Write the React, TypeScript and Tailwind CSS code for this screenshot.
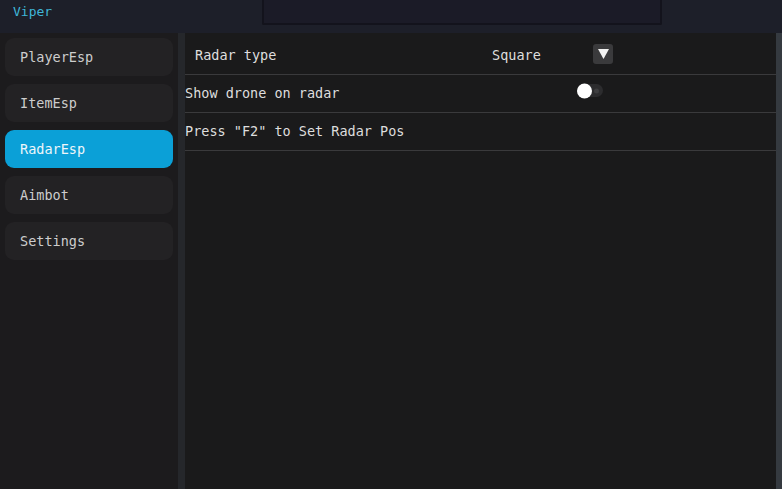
import { useState } from "react";

const tabs = ["PlayerEsp", "ItemEsp", "RadarEsp", "Aimbot", "Settings"];

export default function App() {
  const [active, setActive] = useState("RadarEsp");
  const [drone, setDrone] = useState(false);

  return (
    <div
      className="flex h-[489px] w-[782px] flex-col overflow-hidden bg-[#1d1f29] text-[13.5px] text-[#dedede]"
      style={{ fontFamily: '"DejaVu Sans Mono", "Liberation Mono", monospace' }}
    >
      {/* header */}
      <div className="flex h-[33px] shrink-0 items-start">
        <div className="w-[262px] pl-[13px] pt-[3px] text-[13px] leading-[18px] text-[#3fb6d8]">
          Viper
        </div>
        <div className="h-[25px] w-[400px] rounded-b-[2px] border-2 border-t-0 border-[#13131c] bg-[#1b1b27]" />
      </div>

      {/* body */}
      <div className="flex flex-1">
        <div className="flex w-[178px] shrink-0 flex-col gap-[8px] bg-[#1c1b1d] px-[5px] pt-[5px]">
          {tabs.map((t) => (
            <button
              key={t}
              onClick={() => setActive(t)}
              className={`flex h-[38px] items-center rounded-[9px] pl-[15px] text-left ${
                active === t
                  ? "bg-[#0ba0d7] text-[#eef6fa]"
                  : "bg-[#232224] text-[#cdcdcd]"
              }`}
            >
              {t}
            </button>
          ))}
        </div>

        <div className="w-[7px] shrink-0 bg-[#25272b]" />

        <div className="flex flex-1 flex-col bg-[#1a1a1b]">
          <div className="flex h-[42px] items-center border-b border-[#3a3a3c] pl-[10px] pt-[3px]">
            <span className="w-[297px]">Radar type</span>
            <span className="w-[101px]">Square</span>
            <span className="-mt-[3px] flex h-[20px] w-[20px] items-center justify-center rounded-[3px] bg-[#3a3a3c]">
              <svg width="11" height="10" viewBox="0 0 11 10">
                <path d="M0 0 H11 L5.5 10 Z" fill="#f2f2f2" />
              </svg>
            </span>
          </div>
          <div className="flex h-[38px] items-center border-b border-[#3a3a3c]">
            <span className="w-[392px]">Show drone on radar</span>
            <button
              onClick={() => setDrone(!drone)}
              className="relative -mt-[6px] h-[13px] w-[26px] rounded-full bg-[#2c2c2e]"
            >
              <span
                className={`absolute top-1/2 h-[15px] w-[15px] -translate-y-1/2 rounded-full bg-white ${
                  drone ? "left-[12px]" : "left-0"
                }`}
              />
              <span className="absolute right-[4px] top-1/2 h-[5px] w-[5px] -translate-y-1/2 rounded-full bg-[#3e3e40]" />
            </button>
          </div>
          <div className="flex h-[38px] items-center border-b border-[#3a3a3c]">
            Press "F2" to Set Radar Pos
          </div>
        </div>

        <div className="w-[6px] shrink-0 bg-[#353a40]" />
      </div>
    </div>
  );
}
